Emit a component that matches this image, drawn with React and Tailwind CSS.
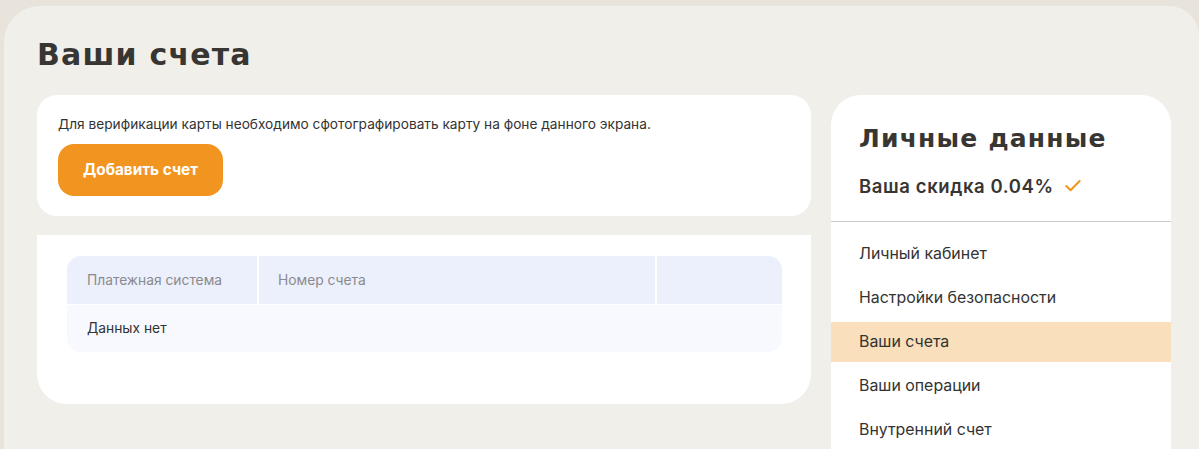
import { Check } from "lucide-react"

const menu = [
  "Личный кабинет",
  "Настройки безопасности",
  "Ваши счета",
  "Ваши операции",
  "Внутренний счет",
]

const wide = { fontFamily: '"DejaVu Sans", sans-serif' }

export default function App() {
  return (
    <div className="w-[1199px] h-[449px] overflow-hidden bg-[#e8e4db] pt-[6px] pl-[4px]" style={{ fontFamily: 'Inter, "Noto Sans", sans-serif' }}>
      <div className="h-[460px] bg-[#f1efea] rounded-tl-[36px] rounded-tr-[30px] pl-[33px] pr-[28px] pt-[31px]">
        <h1 className="text-[30px] leading-[36px] font-bold text-[#383633] tracking-[1.2px]" style={wide}>
          Ваши счета
        </h1>
        <div className="flex gap-[20px] mt-[22px]">
          <div className="w-[774px] flex flex-col">
            <div className="bg-white rounded-[20px] px-[21px] pt-[20px] pb-[20px]">
              <p className="text-[13.7px] leading-[18px] text-[#333]">
                Для верификации карты необходимо сфотографировать карту на фоне данного экрана.
              </p>
              <button className="mt-[11px] h-[52px] w-[165px] rounded-[16px] bg-[#f29520] text-white text-[15.3px] font-bold">
                Добавить счет
              </button>
            </div>
            <div className="bg-white mt-[19px] rounded-b-[30px] pl-[30px] pr-[29px] pt-[21px] pb-[52px]">
              <div className="rounded-[14px] overflow-hidden">
                <div className="flex h-[48px] text-[13.8px] text-[#8a8a8e]">
                  <div className="w-[190px] bg-[#ecf0fc] flex items-center pl-[20px]">Платежная система</div>
                  <div className="w-[2px] bg-white" />
                  <div className="w-[396px] bg-[#ecf0fc] flex items-center pl-[19px]">Номер счета</div>
                  <div className="w-[2px] bg-white" />
                  <div className="flex-1 bg-[#ecf0fc]" />
                </div>
                <div className="h-[48px] bg-[#f7f9fe] border-t border-white flex items-center pl-[20px] text-[13.8px] text-[#333]">
                  Данных нет
                </div>
              </div>
            </div>
          </div>
          <div className="w-[340px] h-[400px] bg-white rounded-t-[30px] flex flex-col">
            <div className="px-[28px] pt-[28px] pb-[23px]">
              <h2 className="text-[25px] leading-[32px] font-bold text-[#383633] tracking-[1.2px]" style={wide}>
                Личные данные
              </h2>
              <div className="flex items-center mt-[19px] text-[18.5px] leading-[24px] font-semibold text-[#383633] tracking-[0.6px]">
                Ваша скидка 0.04%
                <Check className="ml-[9px] text-[#f29520]" size={20} strokeWidth={2.5} />
              </div>
            </div>
            <div className="h-px bg-[#cccccc]" />
            <div className="pt-[12px] flex flex-col gap-[4px]">
              {menu.map((m) => (
                <div
                  key={m}
                  className={`h-[40px] flex items-center pl-[28px] text-[15.9px] text-[#333] ${m === "Ваши счета" ? "bg-[#f9dfbc]" : ""}`}
                >
                  {m}
                </div>
              ))}
            </div>
          </div>
        </div>
      </div>
    </div>
  )
}
